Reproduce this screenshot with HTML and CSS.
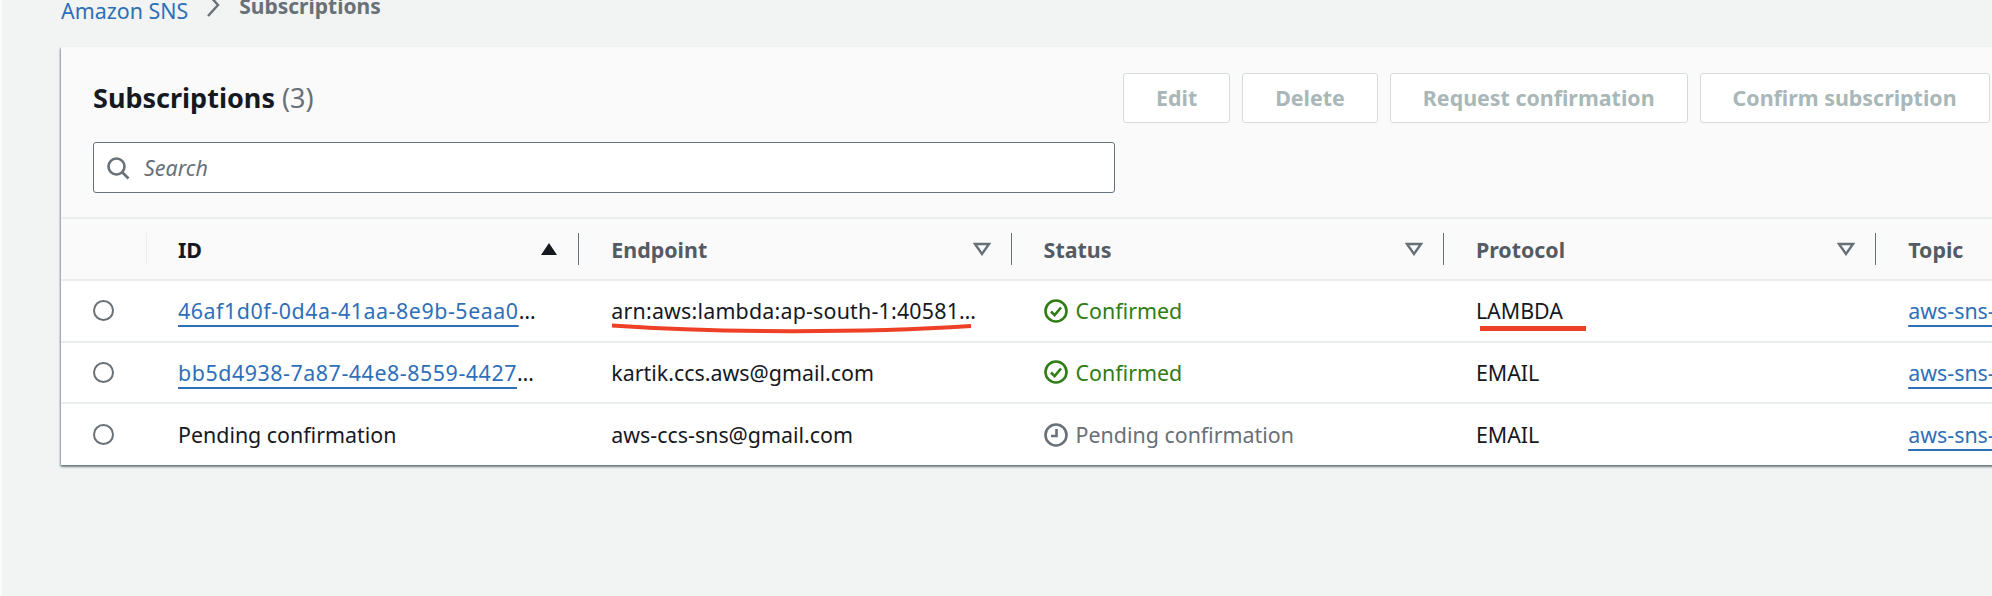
FILE: index.html
```html
<!DOCTYPE html>
<html lang="en">
<head>
    <meta charset="UTF-8">
    <title>Subscriptions</title>
    <link rel="stylesheet" href="styles.css">
</head>
<body>
    <nav class="crumbs">
        <a class="crumb-link" href="#">Amazon SNS</a>
        <svg class="crumb-arrow" width="16" height="24" viewBox="0 0 16 24"><path d="M3 1l10 11L3 23" fill="none" stroke="#687078" stroke-width="2.4"/></svg>
        <span class="crumb-current">Subscriptions</span>
    </nav>

    <section class="card">
        <div class="card-head">
            <h1 class="card-title">Subscriptions <span class="count">(3)</span></h1>
            <div class="actions">
                <button type="button" class="btn">Edit</button>
                <button type="button" class="btn">Delete</button>
                <button type="button" class="btn">Request confirmation</button>
                <button type="button" class="btn">Confirm subscription</button>
            </div>
            <div class="search">
                <svg width="24" height="24" viewBox="0 0 24 24"><circle cx="10.5" cy="10.5" r="8" fill="none" stroke="#687078" stroke-width="2.6"/><path d="M16.5 16.5l6 6" fill="none" stroke="#687078" stroke-width="2.6"/></svg>
                <span class="search-text">Search</span>
            </div>
        </div>

        <table class="subs">
            <colgroup>
                <col class="col-select">
                <col class="col-data">
                <col class="col-data">
                <col class="col-data">
                <col class="col-data">
                <col class="col-data">
            </colgroup>
            <thead>
                <tr>
                    <th><span class="head-cell head-light"></span></th>
                    <th>
                        <span class="head-cell head-sorted">ID
                            <svg class="sort" width="18" height="14" viewBox="0 0 18 14"><path d="M9 1l8 12H1z" fill="#16191f"/></svg>
                        </span>
                    </th>
                    <th>
                        <span class="head-cell">Endpoint
                            <svg class="sort" width="18" height="14" viewBox="0 0 18 14"><path d="M2 2h14L9 12z" fill="none" stroke="#687078" stroke-width="2.4"/></svg>
                        </span>
                    </th>
                    <th>
                        <span class="head-cell">Status
                            <svg class="sort" width="18" height="14" viewBox="0 0 18 14"><path d="M2 2h14L9 12z" fill="none" stroke="#687078" stroke-width="2.4"/></svg>
                        </span>
                    </th>
                    <th>
                        <span class="head-cell">Protocol
                            <svg class="sort" width="18" height="14" viewBox="0 0 18 14"><path d="M2 2h14L9 12z" fill="none" stroke="#687078" stroke-width="2.4"/></svg>
                        </span>
                    </th>
                    <th><span class="head-cell">Topic</span></th>
                </tr>
            </thead>
            <tbody>
                <tr>
                    <td><span class="radio"></span></td>
                    <td><a class="id-link" href="#">46af1d0f-0d4a-41aa-8e9b-5eaa0</a>…</td>
                    <td>
                        <span class="marked arn">arn:aws:lambda:ap-south-1:40581…
                            <svg class="scribble" width="364" height="12" viewBox="0 0 364 12"><path d="M1 2.5C110 10 250 10 360 3" fill="none" stroke="#ee4026" stroke-width="4"/></svg>
                        </span>
                    </td>
                    <td>
                        <span class="status status-ok">
                            <svg width="24" height="24" viewBox="0 0 24 24"><circle cx="12" cy="12" r="10.5" fill="none" stroke="#2f7d14" stroke-width="2.6"/><path d="M7 12.5l3.6 3.6L17 8.5" fill="none" stroke="#2f7d14" stroke-width="2.6"/></svg>
                            Confirmed
                        </span>
                    </td>
                    <td>
                        <span class="marked">LAMBDA<span class="strike"></span></span>
                    </td>
                    <td><a href="#">aws-sns-topic</a></td>
                </tr>
                <tr>
                    <td><span class="radio"></span></td>
                    <td><a class="id-link" href="#">bb5d4938-7a87-44e8-8559-4427</a>…</td>
                    <td>kartik.ccs.aws@gmail.com</td>
                    <td>
                        <span class="status status-ok">
                            <svg width="24" height="24" viewBox="0 0 24 24"><circle cx="12" cy="12" r="10.5" fill="none" stroke="#2f7d14" stroke-width="2.6"/><path d="M7 12.5l3.6 3.6L17 8.5" fill="none" stroke="#2f7d14" stroke-width="2.6"/></svg>
                            Confirmed
                        </span>
                    </td>
                    <td>EMAIL</td>
                    <td><a href="#">aws-sns-topic</a></td>
                </tr>
                <tr>
                    <td><span class="radio"></span></td>
                    <td>Pending confirmation</td>
                    <td>aws-ccs-sns@gmail.com</td>
                    <td>
                        <span class="status status-wait">
                            <svg width="24" height="24" viewBox="0 0 24 24"><circle cx="12" cy="12" r="10.5" fill="none" stroke="#687078" stroke-width="2.6"/><path d="M12.5 6v7H7" fill="none" stroke="#687078" stroke-width="2.6"/></svg>
                            Pending confirmation
                        </span>
                    </td>
                    <td>EMAIL</td>
                    <td><a href="#">aws-sns-topic</a></td>
                </tr>
            </tbody>
        </table>
    </section>
</body>
</html>
```

FILE: styles.css
```css
html, body {
    height: 100%;
}
body {
    margin: 0;
    overflow: hidden;
    background-color: #f2f3f3;
    border-left: 2px solid #fafafa;
    font-family: "Noto Sans", Arial, sans-serif;
    font-size: 21.4px;
    color: #16191f;
}
a {
    color: #2e6fb8;
    text-decoration: underline;
    text-decoration-thickness: 2px;
    text-decoration-skip-ink: none;
    text-underline-offset: 6px;
}
.id-link {
    letter-spacing: 0.55px;
}
.crumbs {
    height: 22px;
    margin-left: 59px;
    display: flex;
    align-items: flex-end;
    overflow: hidden;
}
.crumb-link {
    line-height: 22px;
    text-decoration-thickness: 3px;
}
.crumb-arrow {
    margin: 0 18px 5px 17px;
}
.crumb-current {
    color: #687078;
    font-size: 21px;
    font-weight: 700;
    line-height: 22px;
    padding-bottom: 5px;
}
.card {
    width: 2400px;
    margin: 25px 0 0 59px;
    background: white;
    box-shadow: 0 2px 2px rgba(0, 28, 36, 0.45), -1px 1px 2px rgba(0, 28, 36, 0.3);
}
.card-head {
    height: 172px;
    box-sizing: border-box;
    padding: 26px 0 0 32px;
    display: grid;
    grid-template-columns: 1030px auto;
    grid-template-rows: 49px 51px;
    row-gap: 20px;
    align-items: center;
    background-color: #fafafa;
    border-bottom: 2px solid #eaeded;
}
.card-title {
    margin: 0;
    font-size: 27px;
    font-weight: 700;
}
.count {
    color: #687078;
    font-weight: 400;
}
.actions {
    display: flex;
    gap: 12px;
}
.btn {
    height: 50px;
    padding: 0 32px;
    background: white;
    border: 1px solid #d5dbdb;
    border-radius: 3px;
    color: #aab7b8;
    font: 700 21.4px "Noto Sans", Arial, sans-serif;
}
.search {
    grid-column: 1 / 3;
    width: 1022px;
    height: 51px;
    box-sizing: border-box;
    display: flex;
    align-items: center;
    gap: 14px;
    padding-left: 12px;
    background: white;
    border: 1px solid #687078;
    border-radius: 3px;
}
.search-text {
    color: #687078;
    font-style: italic;
}
.subs {
    border-collapse: collapse;
    table-layout: fixed;
    width: 2247.5px;
}
.col-select {
    width: 86px;
}
.col-data {
    width: 432.3px;
}
th {
    height: 60px;
    padding: 0;
    background-color: #fafafa;
    border-bottom: 2px solid #eaeded;
    text-align: left;
    color: #545b64;
    font-weight: 700;
}
th:first-child + th {
    color: #16191f;
}
.head-cell {
    height: 32px;
    box-sizing: border-box;
    padding: 0 20px 0 32px;
    display: flex;
    align-items: center;
    justify-content: space-between;
    border-right: 1px solid #687078;
}
th:first-child + th .head-cell {
    padding-left: 31px;
}
.head-light {
    border-right-color: #eaeded;
}
th:last-child .head-cell {
    border-right: none;
}
td {
    height: 59.5px;
    padding: 0 0 0 32px;
    white-space: nowrap;
    border-bottom: 2px solid #eaeded;
}
td:first-child + td {
    padding-left: 31px;
}
tr:last-child td {
    height: 61px;
    border-bottom: none;
}
.radio {
    display: block;
    width: 21px;
    height: 21px;
    box-sizing: border-box;
    background: white;
    border: 2px solid #687078;
    border-radius: 50%;
}
.status {
    display: flex;
    align-items: center;
    gap: 8px;
}
.status-ok {
    color: #2f7d14;
}
.status-wait {
    color: #687078;
}
.marked {
    position: relative;
    display: inline-block;
}
.arn {
    letter-spacing: 0.2px;
}
.scribble {
    position: absolute;
    left: 0;
    top: 27px;
}
.strike {
    position: absolute;
    left: 4px;
    top: 30px;
    width: 106px;
    height: 5px;
    background-color: #ee4026;
}
```
